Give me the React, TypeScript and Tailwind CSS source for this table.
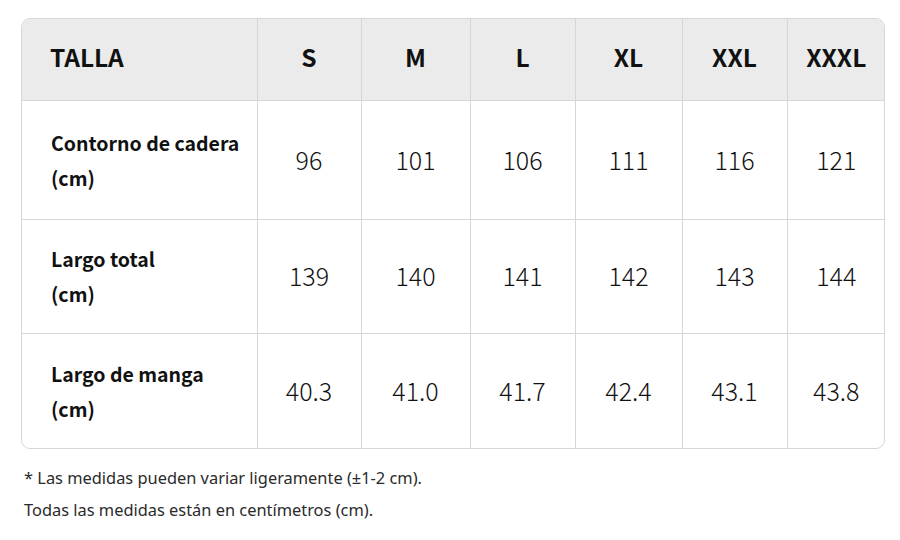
import React from 'react';

const sizes = ['S', 'M', 'L', 'XL', 'XXL', 'XXXL'];
const colWidths = ['w-[104px]', 'w-[109px]', 'w-[105px]', 'w-[107px]', 'w-[105px]', 'w-[98px]'];

interface Row {
  label: string;
  values: string[];
  height: string;
}

const rows: Row[] = [
  { label: 'Contorno de cadera', values: ['96', '101', '106', '111', '116', '121'], height: 'h-[119px]' },
  { label: 'Largo total', values: ['139', '140', '141', '142', '143', '144'], height: 'h-[114px]' },
  { label: 'Largo de manga', values: ['40.3', '41.0', '41.7', '42.4', '43.1', '43.8'], height: 'h-[115px]' },
];

export default function App() {
  return (
    <div className="w-[900px] h-[540px] bg-white font-['Noto_Sans_CJK_JP',sans-serif] text-[#111]">
      <div className="pt-[18px] pl-[21px]">
        {/* Size table */}
        <div className="w-[864px] rounded-[9px] border border-[#d6d6d6] overflow-hidden">
          <table className="w-full border-collapse table-fixed">
            <colgroup>
              <col className="w-[235px]" />
              {sizes.map((s, i) => (
                <col key={s} className={colWidths[i]} />
              ))}
            </colgroup>
            <thead>
              <tr className="h-[81px] bg-[#ebebeb]">
                <th className="pl-[28px] pb-[3px] text-left text-[24.5px] font-bold border-r border-b border-[#d6d6d6]">
                  TALLA
                </th>
                {sizes.map((s, i) => (
                  <th
                    key={s}
                    className={`pb-[3px] text-center text-[24.5px] font-bold border-b border-[#d6d6d6] ${i < sizes.length - 1 ? 'border-r' : ''}`}
                  >
                    {s}
                  </th>
                ))}
              </tr>
            </thead>
            <tbody>
              {rows.map((row, r) => (
                <tr key={row.label} className={row.height}>
                  <td
                    className={`pl-[29px] text-left text-[19.5px] font-bold leading-[35px] border-r border-[#d6d6d6] ${r < rows.length - 1 ? 'border-b' : ''}`}
                  >
                    {row.label}
                    <br />
                    (cm)
                  </td>
                  {row.values.map((v, i) => (
                    <td
                      key={i}
                      className={`text-center text-[25px] font-light border-[#d6d6d6] ${i < row.values.length - 1 ? 'border-r' : ''} ${r < rows.length - 1 ? 'border-b' : ''}`}
                    >
                      {v}
                    </td>
                  ))}
                </tr>
              ))}
            </tbody>
          </table>
        </div>

        {/* Notes */}
        <div className="mt-[13px] pl-[3px] font-['Noto_Sans',sans-serif] text-[16.4px] text-[#2a2a2a] leading-[32px]">
          <p>* Las medidas pueden variar ligeramente (±1-2 cm).</p>
          <p>Todas las medidas están en centímetros (cm).</p>
        </div>
      </div>
    </div>
  );
}
